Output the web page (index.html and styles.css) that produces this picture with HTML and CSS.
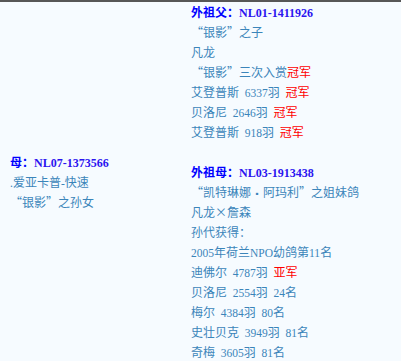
FILE: index.html
```html
<!DOCTYPE html>
<html lang="zh-CN">
<head>
<meta charset="utf-8">
<title>血统</title>
<link rel="stylesheet" href="styles.css">
</head>
<body>
<div class="pedigree">
  <div class="dam">
    <p class="head">母：<span class="num">NL07-1373566</span></p>
    <p><span class="num">.</span>爱亚卡普<span class="num">-</span>快速</p>
    <p>“银影”之孙女</p>
  </div>
  <div class="grand">
    <div class="block">
      <p class="head">外祖父：<span class="num">NL01-1411926</span></p>
      <p>“银影”之子</p>
      <p>凡龙</p>
      <p>“银影”三次入赏<span class="win">冠军</span></p>
      <p>艾登普斯 <span class="num">6337</span>羽 <span class="win">冠军</span></p>
      <p>贝洛尼 <span class="num">2646</span>羽 <span class="win">冠军</span></p>
      <p>艾登普斯 <span class="num">918</span>羽 <span class="win">冠军</span></p>
    </div>
    <div class="block">
      <p class="head">外祖母：<span class="num">NL03-1913438</span></p>
      <p>“凯特琳娜<span class="dot">▪</span>阿玛利”之姐妹鸽</p>
      <p>凡龙×詹森</p>
      <p>孙代获得：</p>
      <p><span class="num">2005</span>年荷兰<span class="num">NPO</span>幼鸽第<span class="num">11</span>名</p>
      <p>迪佛尔 <span class="num">4787</span>羽 <span class="win">亚军</span></p>
      <p>贝洛尼 <span class="num">2554</span>羽 <span class="num">24</span>名</p>
      <p>梅尔 <span class="num">4384</span>羽 <span class="num">80</span>名</p>
      <p>史壮贝克 <span class="num">3949</span>羽 <span class="num">81</span>名</p>
      <p>奇梅 <span class="num">3605</span>羽 <span class="num">81</span>名</p>
    </div>
  </div>
</div>
</body>
</html>
```

FILE: styles.css
```css
html, body {
  margin: 0;
  padding: 0;
  background: #ffffff;
}

.pedigree {
  width: 401px;
  background: #f6fbff;
  border-top: 2px solid #575757;
  display: flex;
  align-items: center;
  font-family: "Noto Sans CJK SC", "Noto Sans", sans-serif;
  font-size: 12px;
  line-height: 20px;
  color: #3b85ba;
  word-spacing: 3px;
}

.pedigree p {
  margin: 0;
  height: 20px;
  white-space: nowrap;
  overflow: visible;
}

.dam {
  width: 191px;
  padding-left: 10px;
  box-sizing: border-box;
  flex: none;
}

.grand {
  display: flex;
  flex-direction: column;
  gap: 20px;
}

.num {
  font-family: "Liberation Serif", serif;
  font-size: 11.5px;
  line-height: 1;
  word-spacing: 0;
}

.head {
  font-weight: bold;
  color: #0000ff;
}

.head .num {
  color: #2b14f0;
  font-size: 12px;
}

.win {
  color: #ff0000;
}

.dot {
  display: inline-block;
  width: 12px;
  text-align: center;
  font-size: 8px;
  line-height: 1;
  color: #3b85ba;
}
```
